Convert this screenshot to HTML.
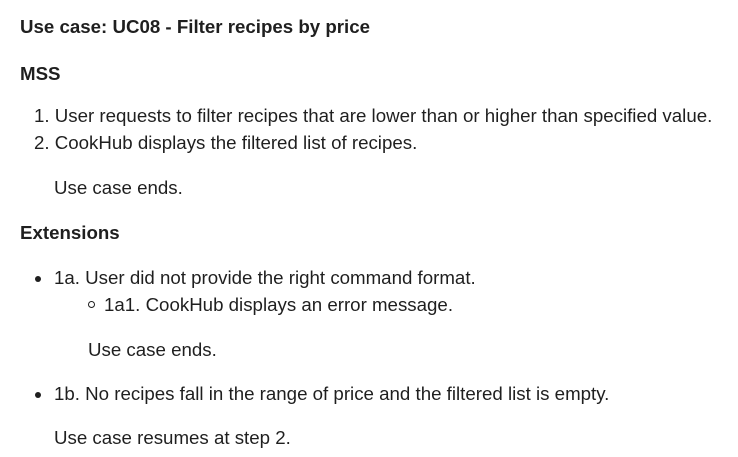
<!DOCTYPE html>
<html><head><meta charset="utf-8"><style>
body{margin:0;width:738px;height:457px;background:#fff;color:#1f1f1f;font-family:"Liberation Sans",sans-serif;font-size:18.7px;position:relative;overflow:hidden}
.l{position:absolute;white-space:nowrap;line-height:20px;transform:translateY(-10px)}
b{font-weight:bold}
.dot{position:absolute;width:6px;height:6px;border-radius:50%;background:#1f1f1f}
.circ{position:absolute;width:5px;height:5px;border-radius:50%;border:1.3px solid #1f1f1f}
</style></head><body>
<div class="l" style="left:20px;top:27px"><b>Use case: UC08 - Filter recipes by price</b></div>
<div class="l" style="left:20px;top:74px"><b>MSS</b></div>
<div class="l" style="left:34px;top:116px">1. User requests to filter recipes that are lower than or higher than specified value.</div>
<div class="l" style="left:34px;top:143px">2. CookHub displays the filtered list of recipes.</div>
<div class="l" style="left:54px;top:188px">Use case ends.</div>
<div class="l" style="left:20px;top:233px"><b>Extensions</b></div>
<div class="dot" style="left:35px;top:276px"></div>
<div class="l" style="left:54px;top:278px">1a. User did not provide the right command format.</div>
<div class="circ" style="left:88px;top:301px"></div>
<div class="l" style="left:104px;top:305px">1a1. CookHub displays an error message.</div>
<div class="l" style="left:88px;top:350px">Use case ends.</div>
<div class="dot" style="left:35px;top:392px"></div>
<div class="l" style="left:54px;top:394px">1b. No recipes fall in the range of price and the filtered list is empty.</div>
<div class="l" style="left:54px;top:438px">Use case resumes at step 2.</div>
</body></html>
